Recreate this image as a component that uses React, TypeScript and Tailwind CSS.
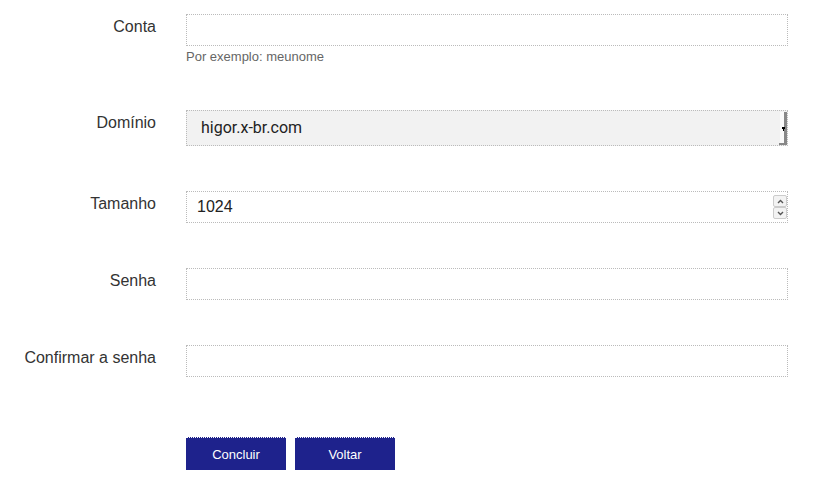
import React from "react";

const FONT = { fontFamily: '"Liberation Sans", Arial, sans-serif' };

function Row({
  label,
  children,
  className = "",
}: {
  label: string;
  children: React.ReactNode;
  className?: string;
}) {
  return (
    <div className={`flex gap-[30px] ${className}`}>
      <label className="w-[156px] shrink-0 text-right text-[16px] leading-[24px] text-[#333] pt-[1px]">
        {label}
      </label>
      <div className="w-[602px]">{children}</div>
    </div>
  );
}

const inputCls =
  "block w-full h-[32px] border border-dotted border-[#bbb] bg-white px-[10px] text-[16px] text-[#222] outline-none";

export default function App() {
  return (
    <div className="w-[830px] h-[495px] bg-white pt-[14px]" style={FONT}>
      <Row label="Conta" className="mb-[44px]">
        <input type="text" className={inputCls} />
        <p className="mt-[1px] text-[13px] leading-[19px] text-[#666]">Por exemplo: meunome</p>
      </Row>

      <Row label="Domínio" className="mb-[45px]">
        <div className="relative">
          <select
            className="block w-full h-[36px] appearance-none border border-dotted border-[#bbb] bg-[#f2f2f2] pl-[14px] text-[16px] text-[#222] outline-none"
            style={{ fontFamily: "Roboto, Arial, sans-serif" }}
            defaultValue="higor.x-br.com"
          >
            <option>higor.x-br.com</option>
          </select>
          <span className="absolute right-[1px] top-[2px] h-[32px] w-[3px] bg-[#888]" />
          <span className="absolute right-[1px] top-[33px] h-[2px] w-[8px] bg-[#888]" />
          <span className="absolute right-[4px] top-[2px] h-[31px] w-[4px] bg-[#fafafa]" />
          <span className="absolute right-[3px] top-[17px] h-[2px] w-[3px] bg-black" />
          <span className="absolute right-[4px] top-[19px] h-[2px] w-[1px] bg-black" />
        </div>
      </Row>

      <Row label="Tamanho" className="mb-[45px]">
        <div className="relative">
          <input type="text" defaultValue="1024" className={inputCls} />
          <div className="absolute right-[1px] top-[4px] flex flex-col">
            <span className="flex h-[12px] w-[14px] items-center justify-center rounded-[2px] border border-[#ccc] bg-[#f3f3f3]">
              <svg width="7" height="5" viewBox="0 0 7 5">
                <path d="M1 4 L3.5 1.5 L6 4" stroke="#555" strokeWidth="1.4" fill="none" />
              </svg>
            </span>
            <span className="flex h-[12px] w-[14px] items-center justify-center rounded-[2px] border border-[#ccc] bg-[#f3f3f3]">
              <svg width="7" height="5" viewBox="0 0 7 5">
                <path d="M1 1 L3.5 3.5 L6 1" stroke="#555" strokeWidth="1.4" fill="none" />
              </svg>
            </span>
          </div>
        </div>
      </Row>

      <Row label="Senha" className="mb-[45px]">
        <input type="password" className={inputCls} />
      </Row>

      <Row label="Confirmar a senha" className="mb-[60px]">
        <input type="password" className={inputCls} />
      </Row>

      <div className="flex gap-[9px] pl-[186px]">
        <button className="h-[33px] w-[100px] border-t border-dotted border-white bg-[#1e228c] pt-[2px] text-[13px] text-white">
          Concluir
        </button>
        <button className="h-[33px] w-[100px] border-t border-dotted border-white bg-[#1e228c] pt-[2px] text-[13px] text-white">
          Voltar
        </button>
      </div>
    </div>
  );
}
